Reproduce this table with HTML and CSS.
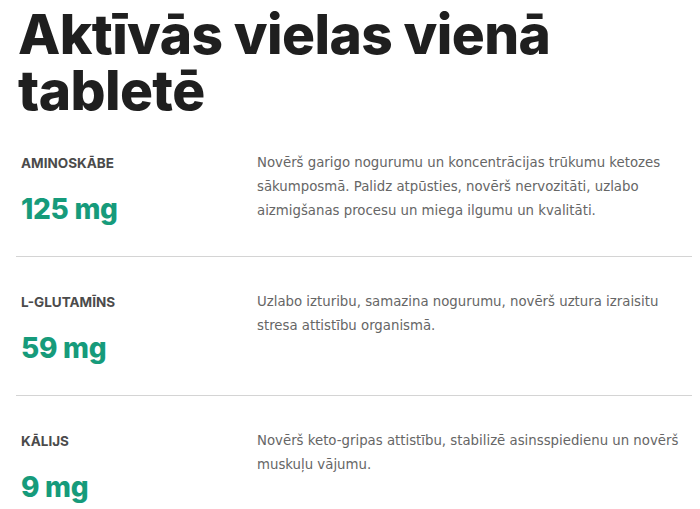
FILE: index.html
```html
<!DOCTYPE html>
<html lang="lv">
<head>
<meta charset="utf-8">
<link rel="stylesheet" href="styles.css">
</head>
<body>
<main class="page">
  <h1 class="title">Aktīvās vielas vienā tabletē</h1>
  <section class="row">
    <div class="left">
      <div class="label">AMINOSKĀBE</div>
      <div class="amount">125 mg</div>
    </div>
    <p class="desc">Novērš garigo nogurumu un koncentrācijas trūkumu ketozes sākumposmā. Palidz atpūsties, novērš nervozitāti, uzlabo aizmigšanas procesu un miega ilgumu un kvalitāti.</p>
  </section>
  <section class="row">
    <div class="left">
      <div class="label">L-GLUTAMĪNS</div>
      <div class="amount">59 mg</div>
    </div>
    <p class="desc">Uzlabo izturibu, samazina nogurumu, novērš uztura izraisitu stresa attistību organismā.</p>
  </section>
  <section class="row">
    <div class="left">
      <div class="label">KĀLIJS</div>
      <div class="amount">9 mg</div>
    </div>
    <p class="desc">Novērš keto-gripas attistību, stabilizē asinsspiedienu un novērš muskuļu vājumu.</p>
  </section>
</main>
</body>
</html>
```
FILE: styles.css
```css
html, body {
  margin: 0;
  padding: 0;
  background: #ffffff;
}
.page {
  padding: 0 8px 0 16px;
  font-family: "DejaVu Sans", sans-serif;
}
.title {
  margin: 0;
  padding: 6px 0 0 2px;
  font-family: Inter, sans-serif;
  font-size: 55px;
  line-height: 56px;
  font-weight: 800;
  color: #1f1f1f;
  letter-spacing: -0.6px;
}
.row {
  display: flex;
  padding: 33px 0 32px 5px;
  border-bottom: 1px solid #d4d4d4;
}
.row:last-child {
  border-bottom: none;
}
.left {
  width: 236px;
  flex: none;
  display: flex;
  flex-direction: column;
  gap: 19px;
}
.label {
  font-family: Inter, sans-serif;
  font-size: 13.5px;
  font-weight: 700;
  color: #4b4b4b;
  line-height: 24px;
}
.amount {
  font-family: Inter, sans-serif;
  font-size: 28px;
  font-weight: 800;
  color: #169b7b;
  line-height: 30px;
  letter-spacing: -0.3px;
}
.desc {
  margin: 0;
  font-family: "DejaVu Sans", sans-serif;
  font-size: 13.3px;
  line-height: 24px;
  color: #666666;
  max-width: 430px;
}
```
